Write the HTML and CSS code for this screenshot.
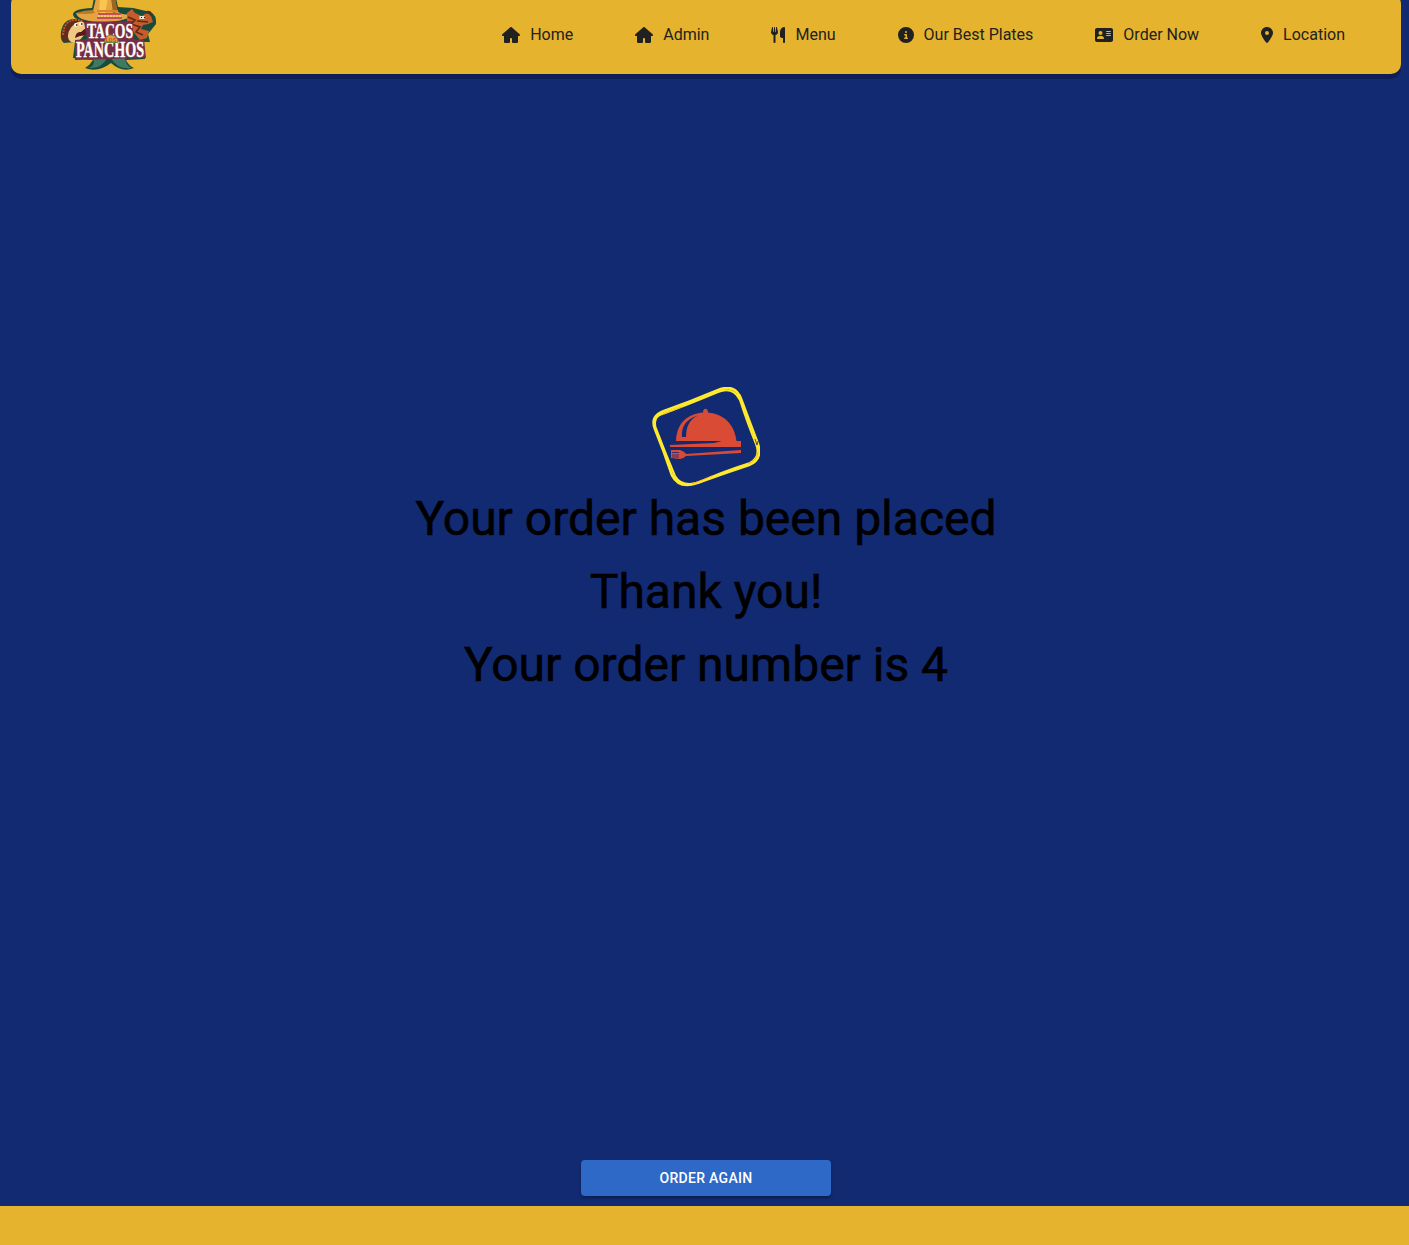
FILE: index.html
```html
<!DOCTYPE html>
<html lang="en">
<head>
<meta charset="utf-8">
<title>Tacos Los Panchos</title>
<link rel="stylesheet" href="styles.css">
</head>
<body>
<div class="page">
  <header class="navbar">
    <svg class="logo" viewBox="0 0 96 72" role="img" aria-label="Tacos Los Panchos">
      <path d="M34-2 L32 8 Q12 9 13 15 Q14 18 17 19 Q3 18 1 32 Q0 41 4 43 L15 42 L13 58 L33 60 Q30 65 25 68 Q38 73 51 63 Q62 73 74 68 Q68 65 66 60 L85 59 L84 42 L90 42 L88 34 L96 24 Q97 12 86 11 L73 8 L58 7 L56-2Z" fill="#174b3c"/>
      <path d="M36-2 L33 11 Q26 14 16 13 Q18 22 45 22 Q69 21 72 14 Q63 16 57 11 L55-2Z" fill="#e5a341"/>
      <path d="M33 10 Q25 10 16 13 Q26 15 35 13Z" fill="#b97a2a"/>
      <path d="M40-2 L39 12 L45 14 L48-2Z" fill="#f6c64e"/>
      <path d="M51-2 L55-2 L58 12 L53 13Z" fill="#9c651f"/>
      <path d="M37 11 H58" stroke="#d98435" stroke-width="2"/>
      <path d="M38 14 H61 M37 18 H62" stroke="#bd3358" stroke-width="1.600"/>
      <path d="M38 16 H61" stroke="#ead58a" stroke-width="1.400" stroke-dasharray="2 1"/>
      <path d="M2 39 Q1 22 14 19 Q24 18 26 25 L17 40 L7 42Z" fill="#632b1b"/>
      <path d="M3 35 Q4 21 14 20 Q22 19 24 24" fill="none" stroke="#bd572b" stroke-width="2" stroke-dasharray="2 1"/>
      <ellipse cx="17" cy="32" rx="7.500" ry="11.500" transform="rotate(35 17 32)" fill="#efc983"/>
      <circle cx="16" cy="25" r="2" fill="#fff1c8"/><circle cx="21" cy="24" r="2" fill="#fff1c8"/>
      <path d="M16 25h1.500M21 24h1.500" stroke="#201b17" stroke-width="1.500"/>
      <path d="M15 38 Q16 31 21 32 L27 27 Q28 36 20 36Z" fill="#5b1719"/>
      <path d="M67 13 L72 9 L75 13 L82 16 Q87 11 91 16 L93 22 L88 24 L83 25 L81 29 L89 31 L87 38 L80 40 L75 34 L67 23Z" fill="#c65b2b"/>
      <path d="M68 17 L75 20 L71 24 L80 27 L76 32 L83 35 M77 21 L88 22 M91 16 Q92 10 85 12" fill="none" stroke="#582b1c" stroke-width="1.700"/>
      <path d="M79.500 17.500 h5" stroke="#eee8d0" stroke-width="3"/><path d="M81 17.500h1M84 17.500h1" stroke="#281914"/>
      <path d="M33 58 L47 58 Q42 69 28 68 Q36 66 33 58Z M51 58 L65 58 Q66 66 72 68 Q57 70 51 58Z" fill="#407963"/>
      <path d="M24 22 L72 21 L74 39 L84 40 L86 58 L15 60 L15 40 L27 39Z" fill="#762e48"/>
      <g class="logo-text" text-anchor="middle">
        <text x="50" y="37.500" font-size="20" textLength="46" lengthAdjust="spacingAndGlyphs">TACOS</text>
        <text x="50" y="57" font-size="22.500" textLength="68" lengthAdjust="spacingAndGlyphs">PANCHOS</text>
      </g>
      <path d="M44.500 42.500 Q45 35 51 35 Q58 36 58 42.500Z" fill="#dba63e" stroke="#648744" stroke-width="1"/>
      <text class="logo-small" x="51" y="41.500" text-anchor="middle">LOS</text>
    </svg>
    <nav class="links">
      <a class="link"><svg class="icon home" viewBox="0 0 576 512"><path d="M575.8 255.5c0 18-15 32.1-32 32.1h-32l.7 160.2c0 2.7-.2 5.4-.5 8.1V472c0 22.1-17.9 40-40 40H360c-22.100 0-40-17.900-40-40v-88c0-17.700-14.300-32-32-32s-32 14.300-32 32v88c0 22.100-17.900 40-40 40H104c-22.100 0-40-17.900-40-40V287.600H32c-18 0-32-14-32-32.100 0-9 3-17 10-24L266.400 8c7-7 15-8 22-8s15 2 21 7l255 224.500c8 7 12 15 11 24z"/></svg>Home</a>
      <a class="link"><svg class="icon home" viewBox="0 0 576 512"><path d="M575.8 255.5c0 18-15 32.1-32 32.1h-32l.7 160.2c0 2.7-.2 5.4-.5 8.1V472c0 22.1-17.9 40-40 40H360c-22.100 0-40-17.900-40-40v-88c0-17.700-14.300-32-32-32s-32 14.300-32 32v88c0 22.100-17.900 40-40 40H104c-22.100 0-40-17.900-40-40V287.600H32c-18 0-32-14-32-32.100 0-9 3-17 10-24L266.400 8c7-7 15-8 22-8s15 2 21 7l255 224.500c8 7 12 15 11 24z"/></svg>Admin</a>
      <a class="link"><svg class="icon utensils" viewBox="0 0 448 512"><path d="M416 0C400 0 288 32 288 176V288c0 35.300 28.700 64 64 64h32V480c0 17.700 14.300 32 32 32s32-14.300 32-32V32c0-17.700-14.300-32-32-32zM64 16C64 7.800 57.900 1 49.700.1S34.200 4.600 32.400 12.500L2.100 148.800C.7 155.100 0 161.500 0 167.900c0 45.900 35.100 83.600 80 87.700V480c0 17.700 14.300 32 32 32s32-14.300 32-32V255.600c44.900-4.100 80-41.800 80-87.700 0-6.400-.7-12.800-2.100-19.100L191.600 12.500C189.800 4.600 182.500-.8 174.300.1S160 7.800 160 16V150.200c0 5.400-4.400 9.800-9.800 9.800-5.100 0-9.300-3.900-9.800-9L127.900 14.600C127.200 6.300 120.300 0 112 0s-15.200 6.300-15.900 14.600L83.700 151c-.5 5.100-4.700 9-9.800 9-5.400 0-9.800-4.400-9.800-9.800V16z"/></svg>Menu</a>
      <a class="link"><svg class="icon info" viewBox="0 0 512 512"><path fill-rule="evenodd" d="M256 512A256 256 0 1 0 256 0a256 256 0 1 0 0 512zM216 336h24V272H216c-13 0-24-11-24-24s11-24 24-24h48c13 0 24 11 24 24v88h8c13 0 24 11 24 24s-11 24-24 24H216c-13 0-24-11-24-24s11-24 24-24zm40-208a32 32 0 1 1 0 64 32 32 0 1 1 0-64z"/></svg>Our Best Plates</a>
      <a class="link"><svg class="icon card" viewBox="0 0 576 512"><path fill-rule="evenodd" d="M64 32C29 32 0 61 0 96V416c0 35 29 64 64 64H512c35 0 64-29 64-64V96c0-35-29-64-64-64zm80 256h64c44 0 80 36 80 80 0 9-7 16-16 16H80c-9 0-16-7-16-16 0-44 36-80 80-80zm-32-96a64 64 0 1 1 128 0 64 64 0 1 1-128 0zm256-64H496c9 0 16 7 16 16s-7 16-16 16H368c-9 0-16-7-16-16s7-16 16-16zm0 64H496c9 0 16 7 16 16s-7 16-16 16H368c-9 0-16-7-16-16s7-16 16-16zm0 64H496c9 0 16 7 16 16s-7 16-16 16H368c-9 0-16-7-16-16s7-16 16-16z"/></svg>Order Now</a>
      <a class="link"><svg class="icon pin" viewBox="0 0 384 512"><path fill-rule="evenodd" d="M215.700 499.200C267 435 384 279.400 384 192 384 86 298 0 192 0S0 86 0 192c0 87.400 117 243 168.300 307.200 12.300 15.300 35.100 15.300 47.400 0zM192 128a64 64 0 1 1 0 128 64 64 0 1 1 0-128z"/></svg>Location</a>
    </nav>
  </header>
  <main class="confirmation">
    <svg class="dish" viewBox="0 0 108 100">
      <g fill="none" stroke="#ffea2e" stroke-linejoin="round">
        <path d="M12 24 Q38 15 65 3.500 Q83-4 89 12 L105.500 56 Q111 72 97 78 Q70 87 45 96 Q27 102 20 88 Q12 64 3 42 Q-2 29 12 24Z" stroke-width="2.800"/>
        <path d="M10 27 Q35 18 66 5 Q81-1 88 13 Q96 38 104 57 Q109 70 98 76 Q67 86 48 95 Q30 101 23 89 Q13 65 3.500 40 Q1 30 10 27Z" stroke-width="2"/>
      </g>
      <path d="M12 27 Q20 24 30 20 M40 97 Q53 92 60 89 M96 77 Q105 73 106 65" fill="none" stroke="#f6b52d"/>
      <path d="M103 52 L105 58 L106 54" fill="none" stroke="#122a72" stroke-width=".8"/>
      <g fill="#da4b36">
        <path fill-rule="evenodd" d="M24 54 C25 35 36 27 51 25.500 C51 20.500 56 20.500 56 25.500 C73 27 83 39 84.500 54ZM30 50 H34 C34 39 38 32 46 28.500 C34 32 29 40 30 50Z"/>
        <path d="M18 58 L62 56 L70 54 H89 V60 H18Z"/>
        <path d="M19 63 L28 63 Q33 65 34 67 L89 63 V66 L34 69 Q31 72 28 72 L19 71Z"/>
      </g>
      <path d="M20 65.500h7M20 68h7M20 70h7" stroke="#122a72" stroke-width=".8"/>
    </svg>
    <p class="message">Your order has been placed</p>
    <p class="message">Thank you!</p>
    <p class="message">Your order number is 4</p>
  </main>
  <button class="again">Order again</button>
</div>
</body>
</html>
```
FILE: styles.css
```css
* { box-sizing: border-box; }
body {
  margin: 0;
  height: 1245px;
  overflow: hidden;
  background: #e5b32d;
  font-family: Roboto, "Liberation Sans", sans-serif;
}
.page {
  height: 1206px;
  display: flex;
  flex-direction: column;
  align-items: center;
  background: #122a72;
  padding: 0 8px 10px 11px;
}
.navbar {
  width: 100%;
  height: 80px;
  margin-top: -6px;
  padding: 6px 56px 0 49px;
  flex: none;
  display: flex;
  align-items: flex-start;
  justify-content: space-between;
  border-radius: 10px;
  background: #e5b32d;
  box-shadow: 0 5px 0 rgba(12, 24, 70, .6);
}
.logo { width: 96px; height: 72px; }
.logo-text {
  font-family: "Liberation Serif", serif;
  font-weight: bold;
  fill: #fffdf5;
  stroke: #fffdf5;
  stroke-width: .4px;
}
.logo-small { font: bold 6px Roboto, sans-serif; fill: #e14432; }
.links { display: flex; gap: 62px; height: 69px; align-items: center; }
.link {
  display: flex;
  align-items: center;
  gap: 10px;
  color: #212121;
  font-size: 16px;
  line-height: 24px;
  white-space: nowrap;
}
.icon { height: 16px; fill: #212121; }
.home, .card { width: 18px; }
.utensils { width: 14px; }
.info { width: 16px; }
.pin { width: 12px; }
.confirmation {
  margin-top: 313px;
  display: flex;
  flex-direction: column;
  align-items: center;
}
.dish { width: 108px; height: 100px; margin-bottom: -5px; }
.message {
  margin: 0;
  font-size: 48px;
  line-height: 73px;
  color: #000;
  -webkit-text-stroke: .6px #000;
}
.again {
  width: 250px;
  height: 36px;
  margin-top: auto;
  border: 0;
  border-radius: 4px;
  background: #2f69c7;
  color: #fff;
  font: 500 14px/24px Roboto, sans-serif;
  letter-spacing: .3px;
  text-transform: uppercase;
  box-shadow: 0 2px 3px rgba(0, 0, 0, .35);
}
```
